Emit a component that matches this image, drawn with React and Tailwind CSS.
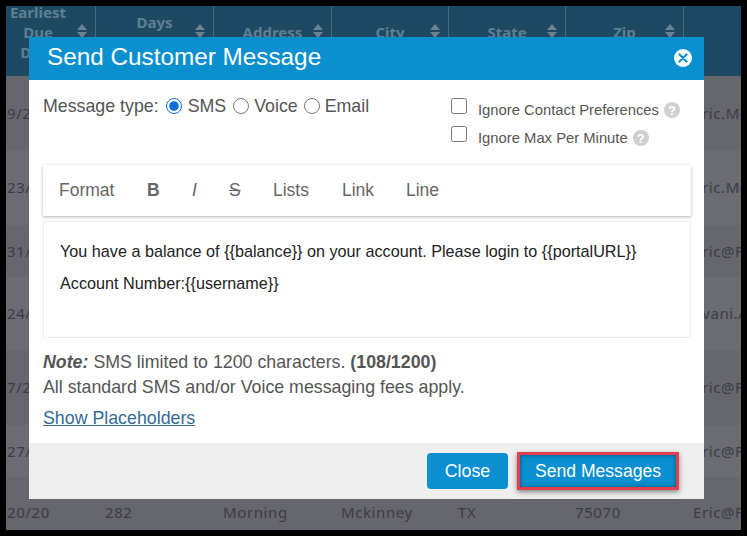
import React from 'react';

const columns = [
  { label: ['Earliest', 'Due', 'Date'], width: 'w-[90px]', spacer: 'w-0', text: 'w-[64px]' },
  { label: ['Days', 'Overdue'], width: 'w-[118px]', spacer: 'w-[18px]', text: 'flex-1' },
  { label: ['Address'], width: 'w-[118px]', spacer: 'w-[18px]', text: 'flex-1' },
  { label: ['City'], width: 'w-[117px]', spacer: 'w-[18px]', text: 'flex-1' },
  { label: ['State'], width: 'w-[117px]', spacer: 'w-[18px]', text: 'flex-1' },
  { label: ['Zip'], width: 'w-[118px]', spacer: 'w-[18px]', text: 'flex-1' },
];

const rows = [
  { h: 'h-[74px]', alt: false, cells: ['9/20/20', '300', 'Main', 'Dallas', 'TX', '75001', 'Eric.Mc'] },
  { h: 'h-[75px]', alt: true, cells: ['23/20', '290', 'Oak', 'Plano', 'TX', '75023', 'Eric.Mc'] },
  { h: 'h-[52px]', alt: false, cells: ['31/20', '288', 'Elm', 'Frisco', 'TX', '75034', 'Eric@F'] },
  { h: 'h-[73px]', alt: true, cells: ['24/20', '286', 'Lake', 'Allen', 'TX', '75002', 'Jivani.A'] },
  { h: 'h-[75px]', alt: false, cells: ['7/27/20', '285', 'Park', 'Irving', 'TX', '75038', 'Eric@F'] },
  { h: 'h-[52px]', alt: true, cells: ['27/20', '284', 'Hill', 'Celina', 'TX', '75009', 'Eric@F'] },
  { h: 'h-[53px] pt-[18px]', alt: false, cells: ['20/20', '282', 'Morning', 'Mckinney', 'TX', '75070', 'Eric@F'] },
];

const cellWidths = ['w-[90px]', 'w-[118px]', 'w-[118px]', 'w-[117px]', 'w-[117px]', 'w-[118px]', 'w-[57px]'];

const SortIcon = () => (
  <svg width="10" height="14" viewBox="0 0 10 14" className="mb-[2px] shrink-0">
    <path d="M5 0 L10 6 H0 Z" fill="#6d8291" />
    <path d="M5 14 L10 8 H0 Z" fill="#6d8291" />
  </svg>
);

const HelpIcon = () => (
  <span className="ml-[5px] flex h-4 w-4 items-center justify-center rounded-full bg-[#cfcfcf] text-[13px] font-bold leading-none text-white">
    ?
  </span>
);

const toolbarItems = [
  { label: 'Format', w: 'w-[88px]', cls: '' },
  { label: 'B', w: 'w-[45px]', cls: 'font-bold' },
  { label: 'I', w: 'w-[37px]', cls: 'italic' },
  { label: 'S', w: 'w-[44px]', cls: 'line-through' },
  { label: 'Lists', w: 'w-[69px]', cls: '' },
  { label: 'Link', w: 'w-[64px]', cls: '' },
  { label: 'Line', w: 'w-[40px]', cls: '' },
];

const App = () => {
  return (
    <div className="relative h-[536px] w-[747px] overflow-hidden bg-black p-[6px] font-['Liberation_Sans',sans-serif]">
      <div className="h-[524px] w-[735px] overflow-hidden bg-[#65666e] font-['Noto_Sans',sans-serif]">
        <div className="flex h-[70px] bg-[#1d4a62]">
          {columns.map((col) => (
            <div key={col.label[0]} className={`${col.width} flex shrink-0 items-center border-r border-[#46697d] pb-[18px] pr-[8px]`}>
              <div className={`${col.spacer} shrink-0`} />
              <div className={`${col.text} text-center text-[15px] font-bold leading-[20px] text-[#5f7f92]`}>
                {col.label.map((line) => (
                  <div key={line}>{line}</div>
                ))}
              </div>
              <div className={col.spacer === 'w-0' ? 'flex-1' : 'hidden'} />
              <SortIcon />
            </div>
          ))}
        </div>
        {rows.map((row) => (
          <div key={row.cells[0]} className={`${row.h} flex items-center ${row.alt ? 'bg-[#6a6b73]' : 'bg-[#65666e]'}`}>
            {row.cells.map((cell, i) => (
              <div
                key={i}
                className={`${cellWidths[i]} shrink-0 overflow-hidden whitespace-nowrap text-[15px] tracking-[0.6px] text-[#3c3d42] ${i === 0 ? 'pl-px' : 'pl-[9px]'}`}
              >
                {cell}
              </div>
            ))}
          </div>
        ))}
      </div>

      <div className="absolute left-[29px] top-[37px] flex h-[462px] w-[675px] flex-col bg-white text-[#555]">
        <div className="flex h-[43px] shrink-0 items-center justify-between bg-[#0a90cf] pb-[2px] pl-[18px] pr-[12px]">
          <h2 className="text-[24.3px] leading-none text-white">Send Customer Message</h2>
          <span className="flex h-[18px] w-[18px] items-center justify-center rounded-full bg-white">
            <svg width="10" height="10" viewBox="0 0 10 10">
              <path d="M1.5 1.5 L8.5 8.5 M8.5 1.5 L1.5 8.5" stroke="#0a90cf" strokeWidth="2.2" strokeLinecap="round" />
            </svg>
          </span>
        </div>

        <div className="flex-1 pl-[14px] pr-[13px]">
          <div className="flex h-[85px] justify-between">
            <div className="flex h-[52px] items-center text-[17.8px]">
              <span>Message type:</span>
              <input type="radio" name="kind" defaultChecked className="ml-[7px] h-4 w-4 accent-[#0b6fd6]" />
              <span className="ml-[6px]">SMS</span>
              <input type="radio" name="kind" className="ml-[7px] h-4 w-4" />
              <span className="ml-[5px]">Voice</span>
              <input type="radio" name="kind" className="ml-[6px] h-4 w-4" />
              <span className="ml-[5px]">Email</span>
            </div>
            <div className="mr-[11px] mt-[20px] flex w-[229px] flex-col gap-[8px] text-[14.8px]">
              <label className="flex h-[20px] items-center">
                <input type="checkbox" className="mb-[8px] h-4 w-4" />
                <span className="ml-[11px]">Ignore Contact Preferences</span>
                <HelpIcon />
              </label>
              <label className="flex h-[20px] items-center">
                <input type="checkbox" className="mb-[8px] h-4 w-4" />
                <span className="ml-[11px]">Ignore Max Per Minute</span>
                <HelpIcon />
              </label>
            </div>
          </div>

          <div className="flex h-[51px] items-center bg-white pl-[16px] text-[17.5px] text-[#666] shadow-[0_1px_3px_rgba(0,0,0,0.3)]">
            {toolbarItems.map((item) => (
              <span key={item.label} className={`${item.w} ${item.cls}`}>
                {item.label}
              </span>
            ))}
          </div>

          <div className="mt-[5px] h-[117px] border border-[#eee] px-[16px] pt-[19px] text-[16.2px] text-[#222]">
            <p className="leading-[20px]">You have a balance of {'{{balance}}'} on your account. Please login to {'{{portalURL}}'}</p>
            <p className="mt-[12px] leading-[20px]">Account Number:{'{{username}}'}</p>
          </div>

          <div className="mt-[12px] text-[17.8px] leading-[25px]">
            <p>
              <b><i>Note:</i></b> SMS limited to 1200 characters. <b>(108/1200)</b>
            </p>
            <p>All standard SMS and/or Voice messaging fees apply.</p>
          </div>
          <a className="mt-[6px] block text-[17.8px] leading-[25px] text-[#336b95] underline">Show Placeholders</a>
        </div>

        <div className="flex h-[56px] shrink-0 items-center justify-end gap-[9px] bg-[#eeeeee] pr-[25px]">
          <button className="h-[36px] w-[81px] rounded-[4px] bg-[#0a8fd0] text-[17.8px] text-white">Close</button>
          <button className="h-[38px] w-[162px] border-[3px] border-[#e0404e] bg-[#0a8fd0] text-[17.6px] text-white shadow-[0_2px_5px_rgba(0,0,0,0.45),inset_0_0_4px_rgba(0,0,0,0.45)]">
            Send Messages
          </button>
        </div>
      </div>
    </div>
  );
};

export default App;
